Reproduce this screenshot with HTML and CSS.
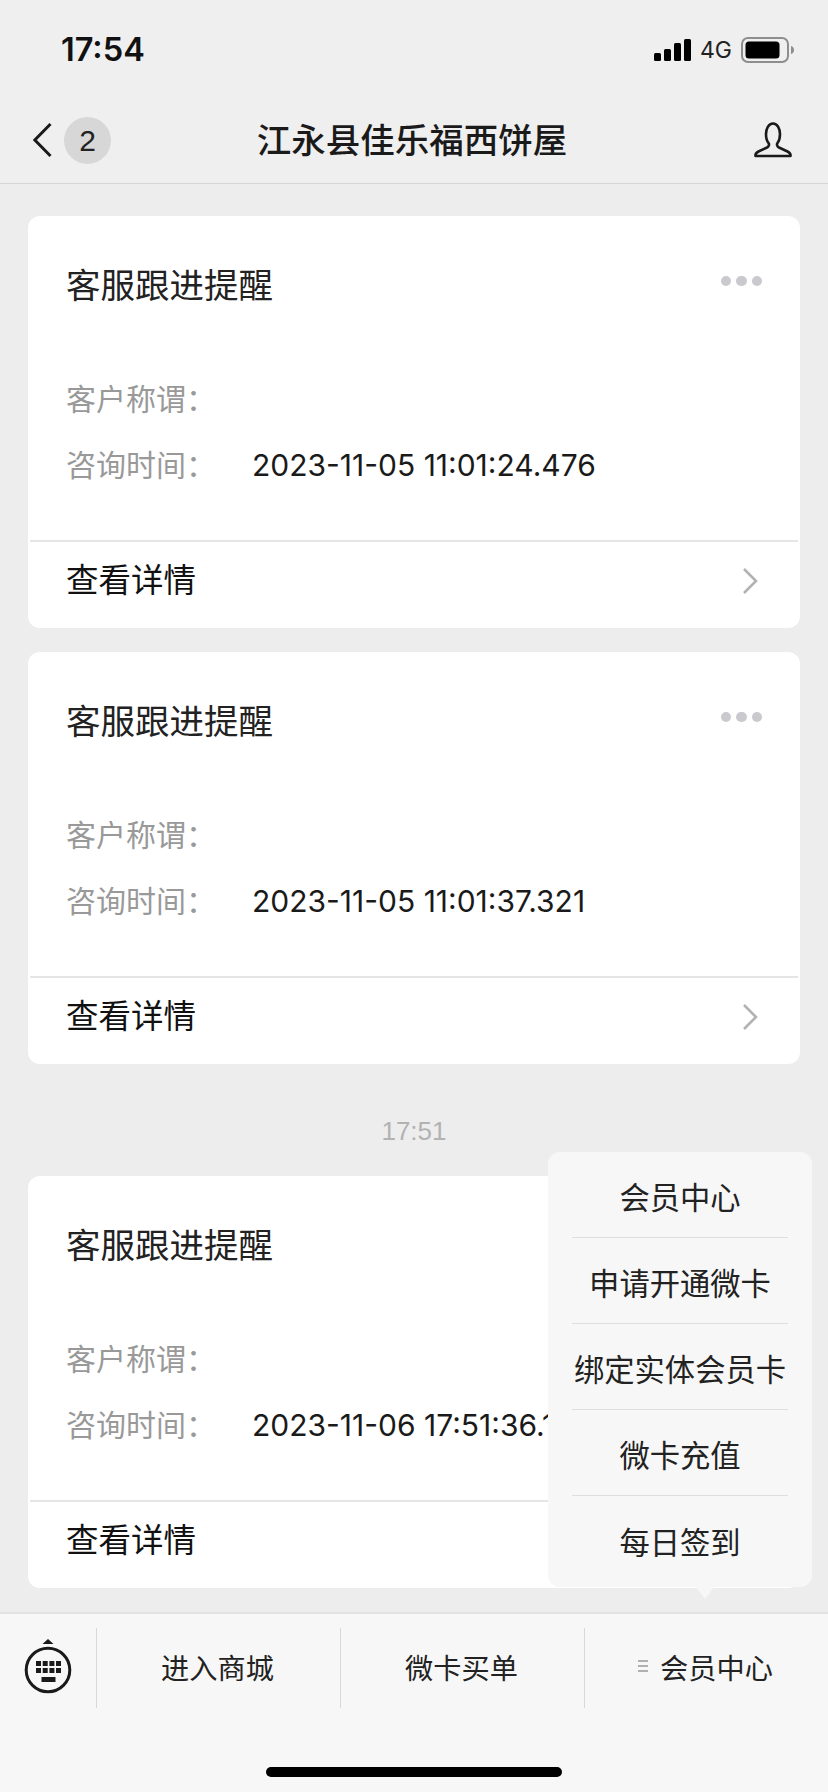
FILE: index.html
```html
<!DOCTYPE html>
<html lang="zh-CN">
  <head>
    <meta charset="UTF-8" />
    <meta name="viewport" content="width=device-width, initial-scale=1.0" />
    <title>江永县佳乐福西饼屋</title>
    <link rel="stylesheet" href="styles.css">
  </head>
  <body>
    <div class="phone">
      <header class="top-bar">
        <div class="status-bar">
          <span class="clock">17:54</span>
          <div class="status-icons">
            <svg class="signal" width="37" height="22" viewBox="0 0 37 22">
              <rect x="0" y="14" width="7" height="8" rx="1.5" />
              <rect x="10" y="10" width="7" height="12" rx="1.5" />
              <rect x="20" y="4" width="7" height="18" rx="1.5" />
              <rect x="30" y="0" width="7" height="22" rx="1.5" />
            </svg>
            <span class="network">4G</span>
            <svg class="battery" width="54" height="26" viewBox="0 0 54 26">
              <rect x="1" y="1" width="46" height="24" rx="6" fill="none" stroke="#8e8e8e" stroke-width="2" />
              <rect x="4.5" y="4.5" width="34" height="17" rx="3.5" fill="#000" />
              <path d="M50 9c2 .6 3 2 3 4s-1 3.400-3 4z" fill="#8e8e8e" />
            </svg>
          </div>
        </div>
        <nav class="nav-bar">
          <div class="nav-left">
            <svg width="20" height="36" viewBox="0 0 20 36">
              <path d="M17.500 2 1.800 18l15.700 16" fill="none" stroke="#1a1a1a" stroke-width="3" />
            </svg>
            <span class="nav-badge">2</span>
          </div>
          <h1 class="nav-title">江永县佳乐福西饼屋</h1>
          <svg class="nav-user" width="40" height="37" viewBox="0 0 40 37">
            <path d="M2.500 34h35c.3-2-1-3.500-3-4.500l-8.500-4c-2-1-2.500-3-1.500-4.500 2-2.500 2.500-5 2.500-9 0-5-2.500-10.500-7-10.500s-7 5.500-7 10.500c0 4 .5 6.500 2.500 9 1 1.500.5 3.500-1.500 4.500l-8.500 4c-2 1-3.300 2.500-3 4.500z" fill="none" stroke="#1a1a1a" stroke-width="2.600" stroke-linejoin="round" />
          </svg>
        </nav>
      </header>

      <main class="messages">
        <article class="card">
          <div class="card-head">
            <h2 class="card-title">客服跟进提醒</h2>
            <div class="dots"><i></i><i></i><i></i></div>
          </div>
          <div class="card-row"><span class="row-label">客户称谓：</span></div>
          <div class="card-row"><span class="row-label">咨询时间：</span><span class="row-value">2023-11-05 11:01:24.476</span></div>
          <div class="card-foot">
            <span>查看详情</span>
            <svg width="16" height="28" viewBox="0 0 16 28"><path d="M2 2l12 12L2 26" fill="none" stroke="#b2b2b2" stroke-width="2.600" /></svg>
          </div>
        </article>

        <article class="card">
          <div class="card-head">
            <h2 class="card-title">客服跟进提醒</h2>
            <div class="dots"><i></i><i></i><i></i></div>
          </div>
          <div class="card-row"><span class="row-label">客户称谓：</span></div>
          <div class="card-row"><span class="row-label">咨询时间：</span><span class="row-value">2023-11-05 11:01:37.321</span></div>
          <div class="card-foot">
            <span>查看详情</span>
            <svg width="16" height="28" viewBox="0 0 16 28"><path d="M2 2l12 12L2 26" fill="none" stroke="#b2b2b2" stroke-width="2.600" /></svg>
          </div>
        </article>

        <p class="time-stamp">17:51</p>

        <article class="card">
          <div class="card-head">
            <h2 class="card-title">客服跟进提醒</h2>
            <div class="dots"><i></i><i></i><i></i></div>
          </div>
          <div class="card-row"><span class="row-label">客户称谓：</span></div>
          <div class="card-row"><span class="row-label">咨询时间：</span><span class="row-value">2023-11-06 17:51:36.184</span></div>
          <div class="card-foot">
            <span>查看详情</span>
            <svg width="16" height="28" viewBox="0 0 16 28"><path d="M2 2l12 12L2 26" fill="none" stroke="#b2b2b2" stroke-width="2.600" /></svg>
          </div>
        </article>

        <!-- Sub menu of the third tab -->
        <ul class="popup-menu">
          <li>会员中心</li>
          <li>申请开通微卡</li>
          <li>绑定实体会员卡</li>
          <li>微卡充值</li>
          <li>每日签到</li>
        </ul>
      </main>

      <footer class="tab-bar">
        <div class="tab-row">
          <div class="tab-keyboard">
            <svg width="50" height="56" viewBox="0 0 50 56">
              <path d="M25 0l5.500 5h-11z" fill="#1a1a1a" />
              <circle cx="25" cy="31" r="21.800" fill="none" stroke="#1a1a1a" stroke-width="3" />
              <g fill="#1a1a1a">
                <rect x="13" y="22" width="5" height="5" />
                <rect x="19.700" y="22" width="5" height="5" />
                <rect x="26.400" y="22" width="5" height="5" />
                <rect x="33" y="22" width="5" height="5" />
                <rect x="13" y="29" width="5" height="5" />
                <rect x="19.700" y="29" width="5" height="5" />
                <rect x="26.400" y="29" width="5" height="5" />
                <rect x="33" y="29" width="5" height="5" />
                <rect x="18.500" y="38" width="14" height="5" />
              </g>
            </svg>
          </div>
          <div class="tab-item">进入商城</div>
          <div class="tab-item">微卡买单</div>
          <div class="tab-item">
            <svg class="tab-lines" width="10" height="12" viewBox="0 0 10 12">
              <path d="M0 1h10M0 6h10M0 11h10" stroke="#999" stroke-width="1.400" />
            </svg>
            会员中心
          </div>
        </div>
        <div class="home-bar"></div>
      </footer>
    </div>
  </body>
</html>
```

FILE: styles.css
```css
/* Basic Reset */
* {
  box-sizing: border-box;
  margin: 0;
  padding: 0;
}

body {
  font-family: "Liberation Sans", "Noto Sans CJK SC", sans-serif;
  background-color: #ededed;
  color: #1a1a1a;
}

.phone {
  width: 828px;
  height: 1792px;
  display: flex;
  flex-direction: column;
  overflow: hidden;
}

/* Top Bar */
.top-bar {
  height: 184px;
  flex-shrink: 0;
  background-color: #efefef;
  border-bottom: 1px solid #d6d6d6;
}

.status-bar {
  height: 99px;
  padding: 0 33px 0 61px;
  display: flex;
  justify-content: space-between;
  align-items: center;
}

.clock {
  font-family: Inter, sans-serif;
  font-size: 32.500px;
  font-weight: 600;
  color: #111;
}

.status-icons {
  display: flex;
  align-items: center;
}

.network {
  margin: 0 9px;
  font-family: Inter, sans-serif;
  font-size: 23px;
  color: #222;
}

.signal {
  fill: #000;
}

.nav-bar {
  height: 84px;
  padding: 0 35px 2px 33px;
  display: flex;
  justify-content: space-between;
  align-items: center;
  position: relative;
}

.nav-left {
  display: flex;
  align-items: center;
  gap: 11px;
}

.nav-badge {
  width: 47px;
  height: 47px;
  border-radius: 50%;
  background-color: #d7d7d7;
  font-size: 30px;
  line-height: 47px;
  text-align: center;
  color: #222;
}

.nav-title {
  font-size: 34.500px;
  font-weight: 500;
  color: #1a1a1a;
  position: absolute;
  left: 0;
  right: 0;
  top: 0;
  height: 84px;
  line-height: 84px;
  padding-right: 4px;
  text-align: center;
}

/* Message List */
.messages {
  flex: 1;
  padding: 32px 28px 0;
  position: relative;
  overflow: hidden;
}

.card {
  height: 412px;
  margin-bottom: 24px;
  padding-top: 46px;
  background-color: #fff;
  border-radius: 12px;
  display: flex;
  flex-direction: column;
}

.card-head {
  height: 42px;
  margin-bottom: 60px;
  padding: 0 38px;
  display: flex;
  justify-content: space-between;
  align-items: center;
}

.card-title {
  font-size: 34.500px;
  font-weight: 400;
  color: #222;
}

.dots {
  display: flex;
  gap: 5px;
  margin-top: -4px;
}

.dots i {
  width: 10.500px;
  height: 10.500px;
  border-radius: 50%;
  background-color: #c9c9ce;
}

.card-row {
  height: 66px;
  padding: 0 38px;
  display: flex;
  align-items: center;
  font-size: 30px;
}

.row-label {
  width: 186px;
  color: #999;
}

.row-value {
  padding-top: 4px;
  font-family: Inter, sans-serif;
  font-size: 30px;
  color: #1a1a1a;
}

.card-foot {
  margin: auto 2px 0;
  height: 88px;
  padding: 0 40px 0 36px;
  border-top: 2px solid #e5e5e5;
  display: flex;
  justify-content: space-between;
  align-items: center;
  font-size: 32.500px;
  color: #111;
}

.card-foot span {
  margin-top: -15px;
}

.card-foot svg {
  margin-top: -9px;
}

.time-stamp {
  height: 96px;
  margin-top: -8px;
  padding-top: 36px;
  font-size: 26px;
  line-height: 30px;
  text-align: center;
  color: #b2b2b2;
}

/* Popup Menu */
.popup-menu {
  position: absolute;
  left: 548px;
  top: 968px;
  width: 264px;
  height: 435px;
  padding: 0 24px;
  list-style: none;
  background-color: #f7f7f7;
  border-radius: 12px;
  font-size: 30.300px;
  color: #222;
}

.popup-menu::after {
  content: "";
  position: absolute;
  left: 148px;
  bottom: -12px;
  border-left: 9px solid transparent;
  border-right: 9px solid transparent;
  border-top: 12px solid #f7f7f7;
}

.popup-menu li {
  height: 86px;
  padding-top: 3px;
  display: flex;
  justify-content: center;
  align-items: center;
  white-space: nowrap;
  border-bottom: 1px solid #dedede;
}

.popup-menu li:last-child {
  border-bottom: none;
}

/* Tab Bar */
.tab-bar {
  height: 180px;
  flex-shrink: 0;
  padding-top: 14px;
  background-color: #f7f7f7;
  border-top: 2px solid #e2e2e2;
}

.tab-row {
  height: 80px;
  display: flex;
}

.tab-keyboard {
  width: 96px;
  display: flex;
  justify-content: center;
  align-items: center;
  padding-bottom: 3px;
}

.tab-item {
  width: 244px;
  padding-right: 2px;
  padding-bottom: 4px;
  border-left: 1px solid #d9d9d9;
  display: flex;
  justify-content: center;
  align-items: center;
  gap: 12px;
  font-size: 28.200px;
  color: #222;
}

.home-bar {
  width: 296px;
  height: 10px;
  margin: 59px auto 0;
  background-color: #000;
  border-radius: 5px;
}
```
